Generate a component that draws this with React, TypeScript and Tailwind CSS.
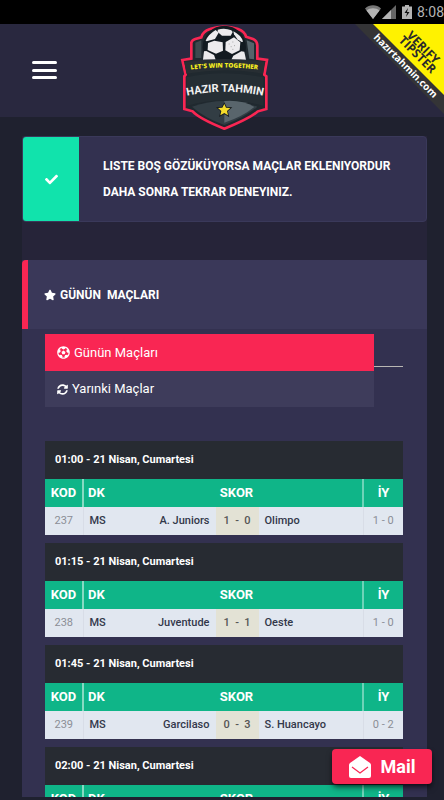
import { FaCheck, FaFutbol, FaStar, FaSyncAlt } from 'react-icons/fa';

interface Match {
  date: string;
  code: number;
  home: string;
  away: string;
  score: [number, number];
  half: string;
}

const matches: Match[] = [
  { date: '01:00 - 21 Nisan, Cumartesi', code: 237, home: 'A. Juniors', away: 'Olimpo', score: [1, 0], half: '1 - 0' },
  { date: '01:15 - 21 Nisan, Cumartesi', code: 238, home: 'Juventude', away: 'Oeste', score: [1, 1], half: '1 - 0' },
  { date: '01:45 - 21 Nisan, Cumartesi', code: 239, home: 'Garcilaso', away: 'S. Huancayo', score: [0, 3], half: '0 - 2' },
  { date: '02:00 - 21 Nisan, Cumartesi', code: 240, home: '', away: '', score: [0, 0], half: '' },
];

function StatusBar() {
  return (
    <div className="flex h-6 shrink-0 items-center justify-end bg-black text-sm text-[#b4b4b4]">
      <svg className="h-4 w-4" viewBox="0 0 16 16" fill="currentColor">
        <path d="M0 4.5C4.5.3 11.500.3 16 4.500L8 15z" fill="#777" />
        <path d="M1.500 6.500C5 3.500 11 3.500 14.500 6.500L8 15z" />
      </svg>
      <svg className="h-4 w-4" viewBox="0 0 16 16">
        <path d="M15 1v14H1z" fill="#666" />
        <path d="M10 6v9H1z" fill="#b4b4b4" />
      </svg>
      <svg className="mx-1 h-4 w-3" viewBox="0 0 12 16">
        <path d="M4 1h4v1.500h3V15H1V2.500h3z" fill="#b4b4b4" />
        <path d="M7 4 3.500 9H6l-1 4 3.500-5H6z" fill="#111" />
      </svg>
      <span>8:08</span>
    </div>
  );
}

function Logo() {
  return (
    <svg className="h-[108px] w-[90px]" viewBox="30 12 270 324" role="img" aria-label="Hazır Tahmin">
      <path
        d="M64 116V68Q66 60 76 57L94 52Q98 34 120 27Q162 12 204 27Q224 34 228 50L249 57Q261 62 262 76V116L291 120L283 164L289 169V267L264 274Q238 296 163 326Q88 296 68 274L43 267V169L47 164L37 120Z"
        fill="#20292f"
        stroke="#f92653"
        strokeWidth="8"
      />
      <path d="M76 114V68L94 61V114z" fill="#3d494e" />
      <path d="M230 61 252 70V118L238 116z" fill="#56636a" />
      <circle cx="163" cy="82" r="65" fill="#121a20" />
      <path d="M107 62Q115 43 137 30L146 38L135 57L110 64z" fill="#ecebed" />
      <path d="M143 29Q164 22 184 31L188 36L182 47L156 47L143 36z" fill="#ecebed" />
      <path d="M190 34Q214 46 219 65L215 66L202 58L192 43z" fill="#ecebed" />
      <path d="M114 69 133 62 158 67 159 92 138 101 113 90z" fill="#ecebed" />
      <path d="M167 66 192 52 211 67 209 91 186 102 166 91z" fill="#ecebed" />
      <path d="M102 94 109 93 132 105 137 119H99z" fill="#ecebed" />
      <path d="M184 119 190 107 214 94 223 95 228 119z" fill="#ecebed" />
      <path d="M176 72h3m8-6h3m-8 14h3m7-3h3m-8 11h3" stroke="#aaa" strokeWidth="3" />
      <path d="M43 126Q163 108 284 126L279 161Q163 140 49 161z" fill="#272e33" />
      <path id="logo-banner" d="M46 151Q163 134 280 151" fill="none" />
      <text fontFamily="'Open Sans', sans-serif" fontWeight="800" fontSize="19" fill="#f4ec20">
        <textPath href="#logo-banner" startOffset="50%" textAnchor="middle">LET'S WIN TOGETHER</textPath>
      </text>
      <path d="M49 172Q163 148 280 172V258Q163 224 49 258z" fill="#252e34" />
      <path d="M66 260Q163 226 262 260Q228 290 163 315Q99 291 66 260" fill="#323d44" />
      <path d="M163 243Q218 239 253 261Q218 290 163 308z" fill="#59656c" />
      <path id="logo-name" d="M40 230Q163 200 290 230" fill="none" />
      <text fontFamily="Roboto, sans-serif" fontWeight="700" fontSize="33" fill="#f1f1f1">
        <textPath href="#logo-name" startOffset="50%" textAnchor="middle">HAZIR TAHMIN</textPath>
      </text>
      <path
        d="m163 252 5 11 13 1-10 9 3 13-11-7-12 7 3-13-10-9 13-1z"
        fill="#f5dc2b"
        stroke="#171c20"
        strokeWidth="5"
        paintOrder="stroke"
      />
    </svg>
  );
}

function Ribbon() {
  return (
    <svg className="absolute top-0 right-0 h-[91px] w-[90px]" viewBox="354 24 90 91" role="img" aria-label="Verify Tipster">
      <path d="M355 24H374L444 94V114z" fill="#343436" />
      <path d="M373 24H444V95z" fill="#fff200" />
      <g fontFamily="'Open Sans', sans-serif" fontWeight="700">
        <text transform="translate(406 36) rotate(45)" fontSize="12" fill="#29292b">VERIFY</text>
        <text transform="translate(398 41) rotate(45)" fontSize="12" fill="#29292b">TIPSTER</text>
        <text transform="translate(373 38) rotate(45)" fontSize="10" fill="#fff">hazırtahmin.com</text>
      </g>
    </svg>
  );
}

function Header() {
  return (
    <header className="relative grid h-[93px] shrink-0 grid-cols-[1fr_auto_1fr] bg-[#29283f] pl-1.5">
      <button type="button" aria-label="Menü" className="mt-[37px] ml-6 flex h-[18px] w-7 flex-col items-center justify-between">
        <span className="h-[3px] w-[25px] rounded-sm bg-white" />
        <span className="h-[3px] w-[25px] rounded-sm bg-white" />
        <span className="h-[3px] w-[25px] rounded-sm bg-white" />
      </button>
      <Logo />
      <Ribbon />
    </header>
  );
}

function MatchTable({ match }: { match: Match }) {
  return (
    <section>
      <h3 className="h-[38px] bg-[#272b32] pl-2.5 text-[11px] leading-[38px] font-bold text-white">{match.date}</h3>
      <table className="w-full table-fixed border-collapse text-[11px]">
        <colgroup>
          <col className="w-[38px]" />
          <col className="w-7" />
          <col />
          <col className="w-[43px]" />
          <col />
          <col className="w-10" />
        </colgroup>
        <thead>
          <tr className="h-7 bg-[#0fb588] text-[13px] text-white">
            <th className="border-r-2 border-[#87dac3] p-0">KOD</th>
            <th className="p-0 pl-1 text-left">DK</th>
            <th colSpan={3} className="p-0">SKOR</th>
            <th className="border-l-2 border-[#6ed3b8] p-0">İY</th>
          </tr>
        </thead>
        <tbody>
          <tr className="h-7 bg-[#e1e7f0] text-[#33384a]">
            <td className="border-r border-[#d8dde7] p-0 text-center text-[#8b8e96]">{match.code}</td>
            <td className="p-0 pl-1.5 font-medium">MS</td>
            <td className="p-0 pr-1.5 text-right font-medium whitespace-nowrap">{match.home}</td>
            <td className="bg-[#e3e2d5] p-0 font-medium text-[#555]">
              <div className="flex justify-between px-2">
                <span>{match.score[0]}</span>
                <span>-</span>
                <span>{match.score[1]}</span>
              </div>
            </td>
            <td className="p-0 pl-1.5 font-medium whitespace-nowrap">{match.away}</td>
            <td className="border-l border-[#d8dde7] p-0 text-center text-[#8b8e96]">{match.half}</td>
          </tr>
        </tbody>
      </table>
    </section>
  );
}

export default function App() {
  return (
    <div className="relative flex h-screen flex-col overflow-hidden bg-[#1f212f] font-[Roboto,sans-serif]">
      <StatusBar />
      <Header />

      <main className="mt-[19px] mr-[17px] mb-[3px] ml-[22px] min-h-0 flex-1 overflow-hidden bg-[#262439]">
        <div
          role="status"
          className="flex h-[86px] items-stretch overflow-hidden rounded border border-[#3a395a] bg-[#333150]"
        >
          <div className="flex w-14 shrink-0 items-center justify-center bg-[#11e3ac] text-white">
            <FaCheck size={13} />
          </div>
          <p className="self-center pr-6 pl-6 text-xs leading-[26px] font-bold text-white">
            LISTE BOŞ GÖZÜKÜYORSA MAÇLAR EKLENIYORDUR DAHA SONRA TEKRAR DENEYINIZ.
          </p>
        </div>

        <section className="mt-[38px] bg-[#333150]">
          <h2 className="flex h-[69px] items-center gap-1 rounded-tl border-l-6 border-[#f92653] bg-[#3a3859] pl-4 text-xs font-bold whitespace-pre text-white">
            <FaStar size={12} />
            GÜNÜN{'  '}MAÇLARI
          </h2>

          <div className="pr-6 pl-[23px]">
            <div className="relative h-[38px] border-b border-[#b9b7b4]">
              <div className="absolute top-[5px] right-[29px] left-0 text-[13px] text-white">
                <button type="button" className="flex h-[37px] w-full items-center gap-1 bg-[#f92653] pl-3">
                  <FaFutbol size={13} />
                  Günün Maçları
                </button>
                <button type="button" className="flex h-9 w-full items-center gap-1 bg-[#3e3c5b] pl-3">
                  <FaSyncAlt size={11} />
                  Yarınki Maçlar
                </button>
              </div>
            </div>

            <div className="mt-[74px] flex flex-col gap-2">
              {matches.map((m) => (
                <MatchTable key={m.code} match={m} />
              ))}
            </div>
          </div>
        </section>
      </main>

      <button
        type="button"
        className="absolute right-3 bottom-4 flex h-[35px] w-[100px] items-center justify-center gap-2.5 rounded bg-[#f92653] text-lg font-bold text-white shadow-md shadow-black/60"
      >
        <svg className="h-[22px] w-[22px]" viewBox="0 0 22 22" fill="#fff">
          <path d="M11 0 21 7Q22 8 22 9V20Q22 22 20 22H2Q0 22 0 20V9Q0 8 1 7z" />
          <path d="m3 11 8 6 8-6" fill="none" stroke="#f92653" strokeWidth="1.200" />
        </svg>
        Mail
      </button>
    </div>
  );
}
